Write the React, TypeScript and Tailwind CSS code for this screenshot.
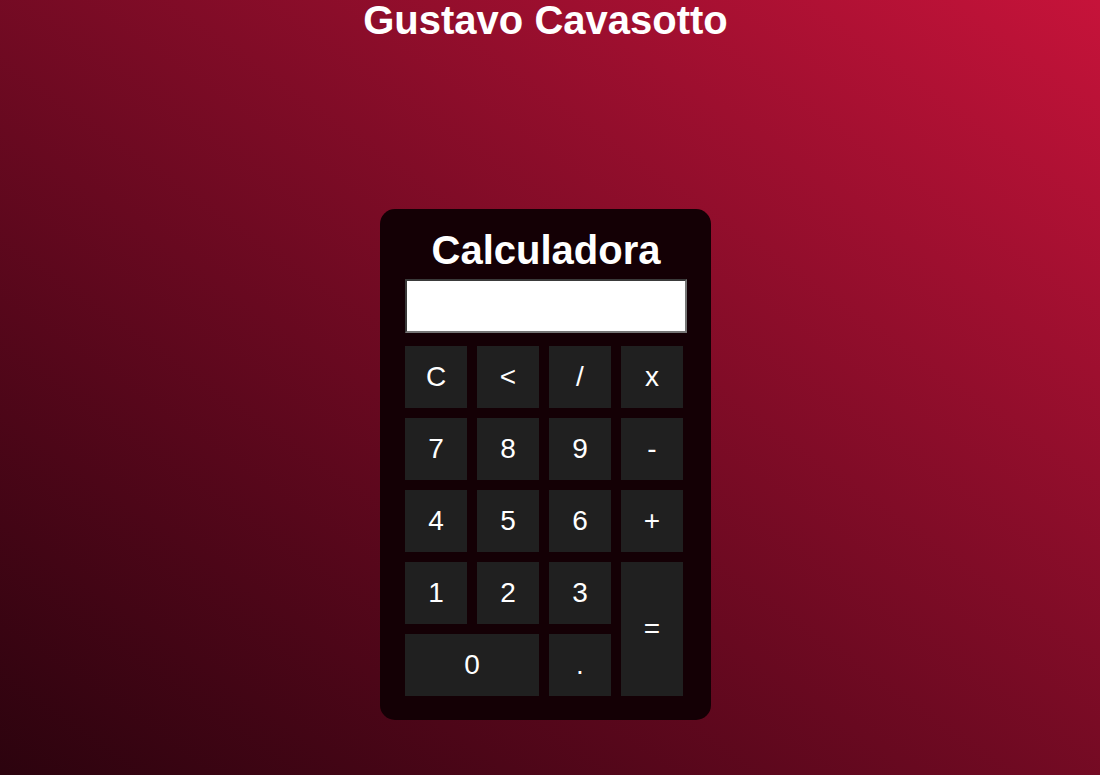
import React from "react";

const rows: { label: string; cls?: string }[] = [
  { label: "C" },
  { label: "<" },
  { label: "/" },
  { label: "x" },
  { label: "7" },
  { label: "8" },
  { label: "9" },
  { label: "-" },
  { label: "4" },
  { label: "5" },
  { label: "6" },
  { label: "+" },
  { label: "1" },
  { label: "2" },
  { label: "3" },
  { label: "=", cls: "row-span-2" },
  { label: "0", cls: "col-span-2" },
  { label: "." },
];

export default function App() {
  return (
    <div
      className="w-full h-[775px] flex flex-col items-center pr-[9px] text-white bg-linear-to-tr from-[#2c030e] to-[#c6133a]"
      style={{ fontFamily: '"Liberation Sans", Arial, sans-serif' }}
    >
      <h1 className="text-[40px] leading-[40px] font-bold">Gustavo Cavasotto</h1>
      <div className="mt-[169px] w-[331px] bg-[#140005] rounded-[15px] pt-[21px] pl-[25px] pr-[24px] pb-[24px] flex flex-col">
        <h2 className="text-[40px] leading-[40px] font-bold text-center">Calculadora</h2>
        <input
          className="mt-[9px] w-[282px] h-[54px] bg-white border-2 border-t-[#3a3a3a] border-l-[#3a3a3a] border-b-[#767676] border-r-[#767676] outline-none"
          readOnly
        />
        <div className="mt-[13px] grid grid-cols-[repeat(4,62px)] auto-rows-[62px] gap-[10px]">
          {rows.map((b) => (
            <button
              key={b.label}
              className={`bg-[#202020] text-[28px] flex items-center justify-center ${b.cls ?? ""}`}
            >
              {b.label}
            </button>
          ))}
        </div>
      </div>
    </div>
  );
}
